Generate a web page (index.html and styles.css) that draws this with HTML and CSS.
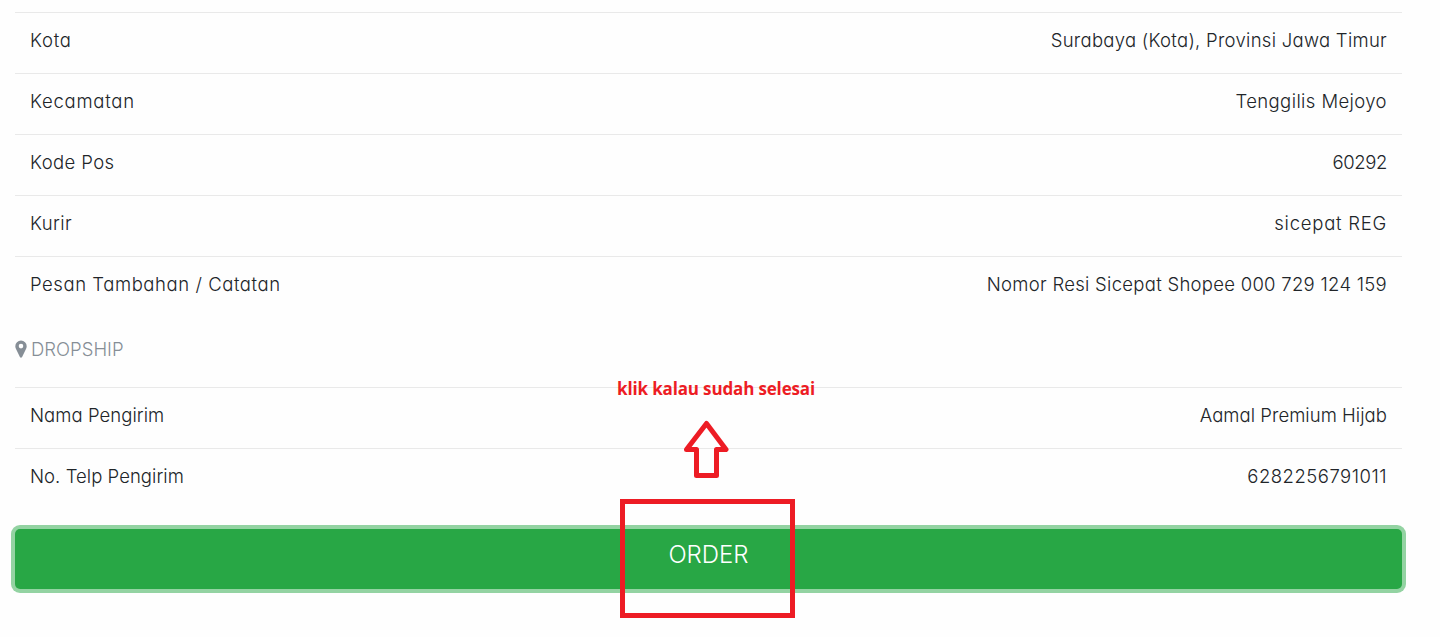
FILE: index.html
```
<!DOCTYPE html>
<html lang="id">
<head>
<meta charset="utf-8">
<meta name="viewport" content="width=device-width, initial-scale=1">
<title>Order</title>
<link rel="stylesheet" href="styles.css">
</head>
<body>

<div class="container">
  <div class="list">
    <div class="item"><span class="wide">Kota</span><span class="address">Surabaya (Kota), Provinsi Jawa Timur</span></div>
    <div class="item"><span class="wide">Kecamatan</span><span>Tenggilis Mejoyo</span></div>
    <div class="item"><span>Kode Pos</span><span class="number">60292</span></div>
    <div class="item"><span>Kurir</span><span class="wide">sicepat REG</span></div>
    <div class="item"><span class="note">Pesan Tambahan / Catatan</span><span class="address">Nomor Resi Sicepat Shopee 000 729 124 159</span></div>
  </div>

  <h5 class="title">
    <svg class="marker" viewBox="0 0 12 18"><path fill-rule="evenodd" d="M6 0.5a5.7 5.7 0 0 0-5.7 5.7c0 1 .2 1.7.6 2.5l4 8.2q1.100 1.500 2.200 0l4-8.200c.4-.8.6-1.500.6-2.500A5.700 5.700 0 0 0 6 .5zM6 3.800a2.300 2.300 0 1 1 0 4.600a2.300 2.300 0 0 1 0-4.600z"/></svg>
    <span>DROPSHIP</span>
  </h5>

  <div class="list sender">
    <div class="item"><span>Nama Pengirim</span><span>Aamal Premium Hijab</span></div>
    <div class="item"><span>No. Telp Pengirim</span><span class="phone">6282256791011</span></div>
  </div>

  <button type="button" class="btn-order">ORDER</button>
</div>

<!-- petunjuk di atas halaman -->
<div class="hint">klik kalau sudah selesai</div>
<svg class="arrow" viewBox="0 0 46 60"><path d="M23.500 4.500L43 30.500H33.500V56.500H13.500V30.500H3.500Z"/></svg>
<div class="box"></div>

</body>
</html>
```
FILE: styles.css
```
* {
  box-sizing: border-box;
}

body {
  min-height: 637px;
  margin: 0;
  background-color: #fefefe;
  color: #212529;
  font-family: Inter, "Liberation Sans", sans-serif;
  font-size: 18.5px;
  font-weight: 300;
  font-feature-settings: "cv11";
}

.container {
  width: 1387px;
  height: 637px;
  padding-top: 12px;
  margin-left: 15px;
}

.item {
  display: flex;
  justify-content: space-between;
  height: 61px;
  padding: 0 15px;
  border-top: 1px solid #e9e9e9;
  letter-spacing: 0.4px;
  line-height: 54px;
  white-space: nowrap;
}

.sender .item {
  letter-spacing: 0.05px;
}

.item .wide {
  letter-spacing: 0.75px;
}

.item .note {
  letter-spacing: 0.56px;
}

.item .address {
  letter-spacing: 0.28px;
}

.item .number {
  letter-spacing: -0.4px;
}

.item .phone {
  letter-spacing: 0.5px;
}

.title {
  display: flex;
  gap: 4px;
  height: 70px;
  margin: 0;
  padding-top: 17px;
  color: #868e96;
  font-size: 18.5px;
  font-weight: 300;
  line-height: 30px;
}

.marker {
  width: 12px;
  height: 18px;
  margin-top: 6px;
  fill: #868e96;
}

/* Order button in its focused state */
.btn-order {
  display: block;
  width: 100%;
  height: 60px;
  margin-top: 20px;
  padding: 0 0 9px;
  border: none;
  border-radius: 5px;
  background-color: #28a745;
  box-shadow: 0 0 0 4px rgba(40, 167, 69, 0.5);
  color: #fff;
  font-family: inherit;
  font-size: 24px;
  font-weight: 300;
}

.hint {
  position: absolute;
  top: 377px;
  left: 617px;
  color: #ed1c24;
  font-family: "Open Sans", sans-serif;
  font-size: 17px;
  font-weight: 700;
  letter-spacing: -0.15px;
  line-height: 24px;
  white-space: nowrap;
}

.arrow {
  position: absolute;
  top: 419px;
  left: 683px;
  width: 46px;
  height: 60px;
  fill: none;
  stroke: #ed1c24;
  stroke-width: 5;
  stroke-linejoin: round;
}

.box {
  position: absolute;
  top: 499px;
  left: 620px;
  width: 175px;
  height: 119px;
  border: 5px solid #ed1c24;
}
```
